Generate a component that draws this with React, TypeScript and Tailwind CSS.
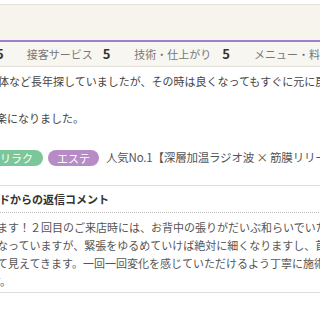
export default function App() {
  const jp = { fontFamily: '"Noto Sans CJK JP", "Noto Sans", sans-serif' };
  return (
    <div className="w-[320px] h-[320px] overflow-hidden bg-white text-[#444]" style={jp}>
      <div className="h-[4px] bg-white" />
      <div className="h-[36px] bg-[#f7f4ee] border-t border-[#e6e3de]" />
      <div className="h-[2px] bg-[#9b7fd1]" />

      {/* ratings row */}
      <div className="h-[25px] bg-[#f8f6f1] border-b border-[#e4e0da] flex items-center whitespace-nowrap -ml-[4px]">
        <span className="text-[13px] font-bold text-[#333]">5</span>
        <span className="w-px h-[15px] bg-[#bbb] ml-[10px]" />
        <span className="ml-[13px] text-[11px] text-[#777]">接客サービス</span>
        <span className="ml-[10px] text-[13px] font-bold text-[#333]">5</span>
        <span className="w-px h-[15px] bg-[#bbb] ml-[11px]" />
        <span className="ml-[13px] text-[11px] text-[#777]">技術・仕上がり</span>
        <span className="ml-[11px] text-[13px] font-bold text-[#333]">5</span>
        <span className="w-px h-[15px] bg-[#bbb] ml-[11px]" />
        <span className="ml-[13px] text-[11px] text-[#777]">メニュー・料金</span>
      </div>

      {/* review */}
      <div className="mt-[5px] text-[11px] leading-[18px] whitespace-nowrap -ml-[2px]">
        体など長年探していましたが、その時は良くなってもすぐに元に戻ってしまい
      </div>
      <div className="mt-[19px] text-[11px] leading-[18px] whitespace-nowrap -ml-[4px]">
        楽になりました。
      </div>

      {/* tags */}
      <div className="mt-[22px] flex items-center whitespace-nowrap -ml-[10px]">
        <span className="h-[16px] px-[10px] rounded-full bg-[#7cc79a] text-white text-[11px] leading-[16px]">リラク</span>
        <span className="ml-[5px] h-[16px] px-[9px] rounded-full bg-[#b78bc6] text-white text-[11px] leading-[16px]">エステ</span>
        <span className="ml-[7px] text-[11.5px] tracking-[-0.2px] text-[#555]">人気No.1【深層加温ラジオ波 × 筋膜リリース】</span>
      </div>

      {/* reply */}
      <div className="mt-[19px] border-y border-[#ddd] bg-white -ml-[1px] w-[340px]">
        <div className="h-[27px] flex items-center border-b border-dotted border-[#bbb] text-[11px] font-bold text-[#333] whitespace-nowrap">
          ドからの返信コメント
        </div>
        <div className="pt-[5px] pb-[2px] text-[11px] leading-[18px] text-[#555] whitespace-nowrap">
          <div className="-ml-[2px]">ます！２回目のご来店時には、お背中の張りがだいぶ和らいでいたので</div>
          <div className="-ml-[2px]">なっていますが、緊張をゆるめていけば絶対に細くなりますし、首</div>
          <div className="-ml-[2px]">て見えてきます。一回一回変化を感じていただけるよう丁寧に施術</div>
          <div className="-ml-[9px]">す。</div>
        </div>
      </div>
    </div>
  );
}
